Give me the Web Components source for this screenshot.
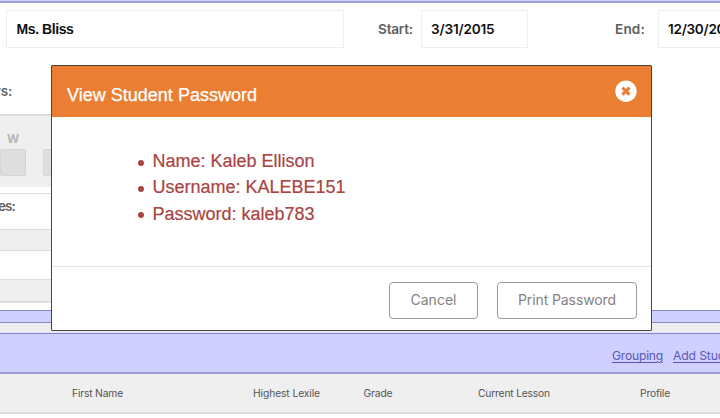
<!DOCTYPE html>
<html lang="en"><head><meta charset="utf-8"><title>Class roster</title>
<style>html,body{margin:0;width:720px;height:418px;overflow:hidden;background:#fff}</style></head>
<body><class-page></class-page>
<script>
const define=(name,html,ready)=>customElements.define(name,class extends HTMLElement{
  connectedCallback(){
    if(this.shadowRoot)return;
    const t=document.createElement('template');t.innerHTML=html;
    this.attachShadow({mode:'open'}).append(t.content.cloneNode(true));
    if(ready)ready(this);
  }
});
// Text tracked to fill a set width (attribute w).
define('fit-text',`<style>:host{display:inline-block;white-space:nowrap;vertical-align:top}</style><slot></slot>`,el=>{
  const n=el.textContent.length,w=+el.getAttribute('w');
  const r=document.createRange();r.selectNodeContents(el);
  el.style.letterSpacing=(w-r.getBoundingClientRect().width)/n+'px';el.style.width=w+'px';
});
define('form-field',`<style>:host{display:flex;align-items:center;box-sizing:border-box;height:38px;border:1px solid #eee;background:#fff;padding-left:9px;color:#111;font:600 13.6px Inter,sans-serif;flex:none;overflow:hidden}</style><slot></slot>`);
define('form-row',`<style>
:host{display:flex;height:70px;padding:7px 0 0 6px;box-sizing:border-box;align-items:flex-start}
.l{font:600 13.6px/38px Inter,sans-serif;color:#606060}
.n{width:338px;padding-left:9.5px;font-family:"Liberation Sans",sans-serif;font-weight:700;font-size:14px}.s{width:107px;margin-left:8px}.e{width:90px;margin-left:13px}
.a{margin-left:34px}.b{margin-left:87px}</style>
<form-field class="n"><fit-text w="57">Ms. Bliss</fit-text></form-field>
<fit-text class="l a" w="35">Start:</fit-text><form-field class="s"><fit-text w="63.5">3/31/2015</fit-text></form-field>
<fit-text class="l b" w="30">End:</fit-text><form-field class="e"><fit-text w="71">12/30/2015</fit-text></form-field>`);
define('schedule-panel',`<style>
:host{display:block;width:60px;height:237px;overflow:hidden;font:600 13.5px Inter,sans-serif;color:#606060}
div{box-sizing:border-box}
.t{height:41px;line-height:36px;margin-left:-7px}
.g{background:#efefef;border-top:2px solid #ddd;height:73px;padding:14px 0 0;display:flex;gap:17px}
.d{width:26px;flex:none;font:700 12px/17px "Open Sans",sans-serif;color:#b5b5b5;text-align:center}
.d i{display:block;height:27px;margin-top:2px;background:#dedede;border:1px solid #d5d5d5;border-radius:2px;box-sizing:border-box}
.w{height:6px}.x{height:36px;border-top:1px solid #ddd;line-height:24px;margin-left:-2px}
.y{height:22px;background:#efefef;border:solid #ddd;border-width:1px 0}
.z{height:28px}.q{height:24px;background:#efefef;border:solid #ddd;border-width:1px 0 2px}</style>
<div class="t"><fit-text w="19">ys:</fit-text></div>
<div class="g"><div class="d">W<i></i></div><div class="d">T<i></i></div></div>
<div class="w"></div><div class="x"><fit-text w="17">es:</fit-text></div><div class="y"></div><div class="z"></div><div class="q"></div>`);
define('roster-table',`<style>
:host{display:block}div{box-sizing:border-box}
.s{height:13px;background:#d0d0ff;border:solid #8787c6;border-width:1px 0}
.g{height:10px;background:#ededed;border-bottom:1px solid #e4e4fc}
.b{height:41px;background:#d0d0ff;border-top:1px solid #8585c5;border-bottom:2px solid #9c9cd5;display:flex;padding:11px 0 0 612px;gap:10px;font:400 12.2px/22px Inter,sans-serif;color:#5858b4;overflow:hidden;white-space:nowrap}
.b fit-text{text-decoration:underline;text-underline-offset:2px}
.h{height:40px;background:#efefef;border-bottom:2px solid #ddd;display:grid;grid-template-columns:72px 181px 110.5px 114.5px 162px 80px;font:400 10.3px/38px Inter,sans-serif;color:#555}
.f{height:6px;background:#fff}</style>
<div class="s"></div><div class="g"></div><div class="b"><fit-text w="51">Grouping</fit-text><fit-text w="76">Add Students</fit-text></div>
<div class="h"><span></span><fit-text w="51">First Name</fit-text><fit-text w="67">Highest Lexile</fit-text><fit-text w="29">Grade</fit-text><fit-text w="72">Current Lesson</fit-text><fit-text w="30">Profile</fit-text></div><div class="f"></div>`);
define('outline-button',`<style>:host{display:flex;justify-content:center;align-items:center;box-sizing:border-box;height:37px;border:1.5px solid #999;border-radius:4px;color:#828282;font:400 14px Inter,sans-serif;padding-bottom:2px}</style><slot></slot>`);
define('close-icon',`<style>:host{display:block;width:22px;height:22px}svg{display:block}</style><svg width="22" height="22" viewBox="0 0 22 22"><circle cx="11" cy="11.2" r="10.7" fill="#fff"/><path d="M8.6 8.8l4.8 4.8m0-4.8l-4.8 4.8" stroke="#ea7e32" stroke-width="3.1" stroke-linecap="square"/></svg>`);
define('password-dialog',`<style>
:host{position:absolute;left:51px;top:65px;width:601px;height:266px;box-sizing:border-box;border:1px solid #444;background:#fff;font-family:"Liberation Sans",Arial,sans-serif;display:flex;flex-direction:column;border-radius:1px}
header{height:51px;box-sizing:border-box;background:#ea7e32;color:#fff;display:flex;justify-content:space-between;padding:15px 14.5px 0 15px;font-size:18px;line-height:28px;-webkit-text-stroke:.25px #fff}
close-icon{margin-top:-1px}
ul{margin:0;padding:31px 0 0 86px;height:149px;box-sizing:border-box;list-style:none;color:#a94442;font-size:18px;line-height:26.3px;-webkit-text-stroke:.2px #a94442}
li{display:flex;align-items:center}li:before{content:"";width:6px;height:6px;border-radius:50%;background:#a94442;margin-right:8.5px;margin-top:3px}
footer{border-top:1px solid #e5e5e5;flex:1;display:flex;justify-content:flex-end;gap:19px;padding:15px 14px 0}
.c{width:89px}.p{width:140px}</style>
<header><fit-text w="190">View Student Password</fit-text><close-icon></close-icon></header>
<ul><li><fit-text w="162">Name: Kaleb Ellison</fit-text></li><li><fit-text w="193">Username: KALEBE151</fit-text></li><li><fit-text w="162">Password: kaleb783</fit-text></li></ul>
<footer><outline-button class="c"><fit-text w="46">Cancel</fit-text></outline-button><outline-button class="p"><fit-text w="98">Print Password</fit-text></outline-button></footer>`);
define('class-page',`<style>:host{display:block;width:720px;height:418px;position:relative;overflow:hidden}
.t{height:3px;box-sizing:border-box;background:#d0d0ff;border-bottom:2px solid #9c9cd8}</style>
<div class="t"></div><form-row></form-row><schedule-panel></schedule-panel><roster-table></roster-table><password-dialog></password-dialog>`);
</script></body></html>
